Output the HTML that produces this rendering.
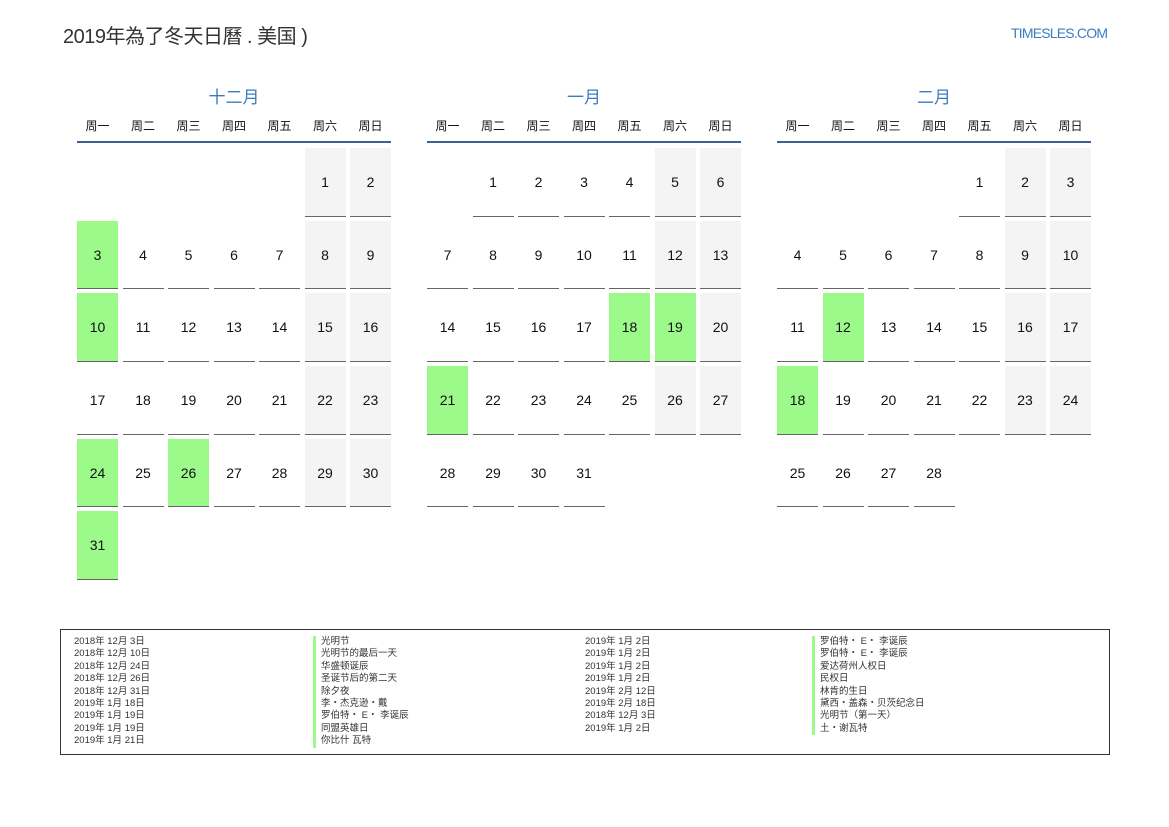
<!DOCTYPE html>
<html><head><meta charset="utf-8"><style>
*{margin:0;padding:0;box-sizing:border-box}
body{width:1169px;height:827px;background:#fff;font-family:"Liberation Sans","Noto Sans CJK SC",sans-serif;position:relative;overflow:hidden;color:#111}
.title{position:absolute;left:63px;top:20px;font-size:20px;color:#333;letter-spacing:-0.5px}
.site{position:absolute;left:1011px;top:25px;font-size:14px;color:#3a7cc0;letter-spacing:-0.8px}
.m{position:absolute;top:84px;width:314px}
.mt{text-align:center;font-size:17px;color:#3a7cc0;height:24px;line-height:24px;margin-top:2px}
.wd{display:grid;grid-template-columns:repeat(7,41px);column-gap:4.5px;margin-top:6px;height:27px;font-size:12px;text-align:center;line-height:20px;border-bottom:2px solid #3d6190}
.g{display:grid;grid-template-columns:repeat(7,41px);column-gap:4.5px;grid-auto-rows:68.5px;row-gap:4.2px;margin-top:5px}
.g div{font-size:14px;text-align:center;line-height:68px;border-bottom:1.5px solid #666}
.g .e{border:none}
.g .w{background:#f4f4f4}
.g .h{background:#9bfa8a}
.lg{position:absolute;left:60px;top:629px;width:1050px;height:126px;border:1.3px solid #333}
.c{position:absolute;top:6px;font-size:9.5px;line-height:12.4px;color:#333;white-space:nowrap}
.n div{border-left:3px solid #9bfa8a;padding-left:5px}
</style></head><body>
<div class="title">2019年為了冬天日曆 . 美国 )</div>
<div class="site">TIMESLES.COM</div>

<div class="m" style="left:77px">
<div class="mt">十二月</div>
<div class="wd"><span>周一</span><span>周二</span><span>周三</span><span>周四</span><span>周五</span><span>周六</span><span>周日</span></div>
<div class="g">
<div class="e"></div><div class="e"></div><div class="e"></div><div class="e"></div><div class="e"></div><div class="w">1</div><div class="w">2</div>
<div class="h">3</div><div>4</div><div>5</div><div>6</div><div>7</div><div class="w">8</div><div class="w">9</div>
<div class="h">10</div><div>11</div><div>12</div><div>13</div><div>14</div><div class="w">15</div><div class="w">16</div>
<div>17</div><div>18</div><div>19</div><div>20</div><div>21</div><div class="w">22</div><div class="w">23</div>
<div class="h">24</div><div>25</div><div class="h">26</div><div>27</div><div>28</div><div class="w">29</div><div class="w">30</div>
<div class="h">31</div>
</div></div>

<div class="m" style="left:427px">
<div class="mt">一月</div>
<div class="wd"><span>周一</span><span>周二</span><span>周三</span><span>周四</span><span>周五</span><span>周六</span><span>周日</span></div>
<div class="g">
<div class="e"></div><div>1</div><div>2</div><div>3</div><div>4</div><div class="w">5</div><div class="w">6</div>
<div>7</div><div>8</div><div>9</div><div>10</div><div>11</div><div class="w">12</div><div class="w">13</div>
<div>14</div><div>15</div><div>16</div><div>17</div><div class="h">18</div><div class="h">19</div><div class="w">20</div>
<div class="h">21</div><div>22</div><div>23</div><div>24</div><div>25</div><div class="w">26</div><div class="w">27</div>
<div>28</div><div>29</div><div>30</div><div>31</div>
</div></div>

<div class="m" style="left:777px">
<div class="mt">二月</div>
<div class="wd"><span>周一</span><span>周二</span><span>周三</span><span>周四</span><span>周五</span><span>周六</span><span>周日</span></div>
<div class="g">
<div class="e"></div><div class="e"></div><div class="e"></div><div class="e"></div><div>1</div><div class="w">2</div><div class="w">3</div>
<div>4</div><div>5</div><div>6</div><div>7</div><div>8</div><div class="w">9</div><div class="w">10</div>
<div>11</div><div class="h">12</div><div>13</div><div>14</div><div>15</div><div class="w">16</div><div class="w">17</div>
<div class="h">18</div><div>19</div><div>20</div><div>21</div><div>22</div><div class="w">23</div><div class="w">24</div>
<div>25</div><div>26</div><div>27</div><div>28</div>
</div></div>

<div class="lg">
<div class="c" style="left:13px"><div>2018年 12月 3日</div><div>2018年 12月 10日</div><div>2018年 12月 24日</div><div>2018年 12月 26日</div><div>2018年 12月 31日</div><div>2019年 1月 18日</div><div>2019年 1月 19日</div><div>2019年 1月 19日</div><div>2019年 1月 21日</div></div>
<div class="c n" style="left:252px"><div>光明节</div><div>光明节的最后一天</div><div>华盛顿诞辰</div><div>圣诞节后的第二天</div><div>除夕夜</div><div>李・杰克逊・戴</div><div>罗伯特・ E・ 李诞辰</div><div>同盟英雄日</div><div>你比什 瓦特</div></div>
<div class="c" style="left:524px"><div>2019年 1月 2日</div><div>2019年 1月 2日</div><div>2019年 1月 2日</div><div>2019年 1月 2日</div><div>2019年 2月 12日</div><div>2019年 2月 18日</div><div>2018年 12月 3日</div><div>2019年 1月 2日</div></div>
<div class="c n" style="left:751px"><div>罗伯特・ E・ 李诞辰</div><div>罗伯特・ E・ 李诞辰</div><div>爱达荷州人权日</div><div>民权日</div><div>林肯的生日</div><div>黛西・盖森・贝茨纪念日</div><div>光明节（第一天）</div><div>土・谢瓦特</div></div>
</div>
</body></html>
